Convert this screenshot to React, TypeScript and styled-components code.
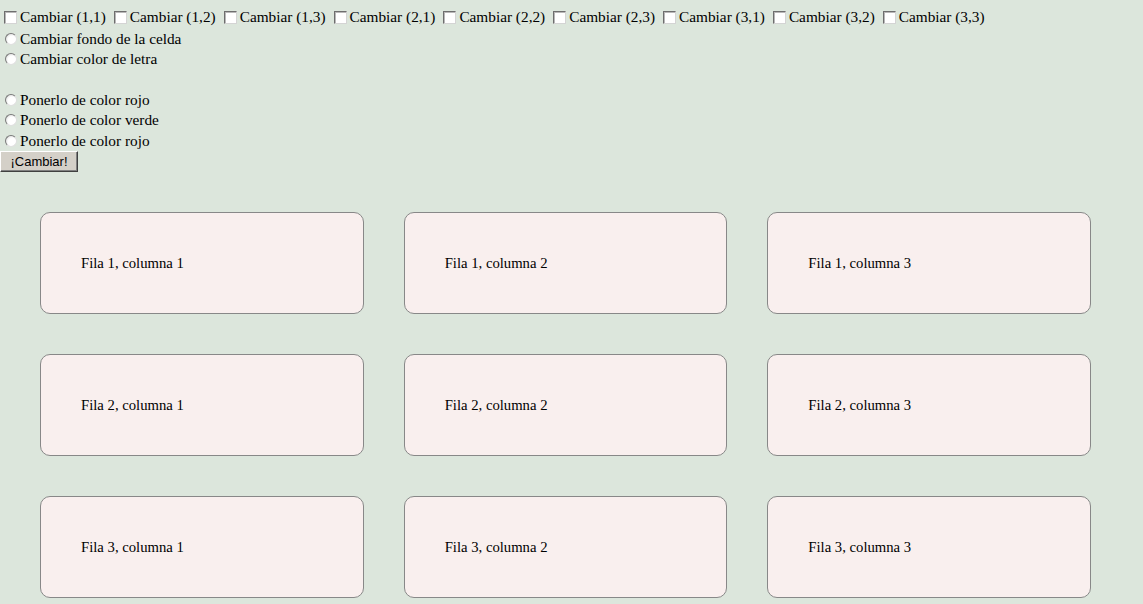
import React from "react";
import styled, { createGlobalStyle } from "styled-components";

const GlobalStyle = createGlobalStyle`
  body {
    margin: 0;
    background: #dce6dc;
    color: #000;
    font-family: "Liberation Serif", "Times New Roman", serif;
    font-size: 15.3px;
  }
`;

const StyledForm = styled.form`
  padding-top: 6px;
`;

const StyledLine = styled.div<{ $tall?: boolean }>`
  display: flex;
  align-items: center;
  gap: 4px;
  height: ${({ $tall }) => ($tall ? "22.5px" : "20.5px")};
  white-space: nowrap;
`;

const StyledSpacer = styled.div`
  height: 20px;
`;

const StyledLabel = styled.label`
  display: flex;
  align-items: center;
  line-height: 20px;
`;

const StyledCheckbox = styled.input.attrs({ type: "checkbox" })`
  appearance: none;
  width: 13px;
  height: 13px;
  margin: 1px 3px 0 4px;
  background: #fff;
  border: 1px solid;
  border-color: #6e6e6e #d4d4d4 #d4d4d4 #6e6e6e;
  box-shadow: inset 1px 1px 0 #b8b8b8;
  box-sizing: border-box;
  &:checked {
    background: #fff radial-gradient(circle, #000 35%, transparent 40%);
  }
`;

const StyledRadio = styled.input.attrs({ type: "radio" })`
  appearance: none;
  width: 12px;
  height: 12px;
  margin: 0 3px 0 5px;
  border-radius: 50%;
  box-sizing: border-box;
  background: radial-gradient(circle at 60% 60%, #fff 45%, #e4e4e4 75%);
  border: 1px solid;
  border-color: #7a7a7a #e0e0e0 #e0e0e0 #7a7a7a;
  &:checked {
    background: radial-gradient(circle, #000 30%, #fff 35%);
  }
`;

const StyledButton = styled.button`
  display: block;
  margin: 0;
  width: 78px;
  height: 21px;
  padding: 0;
  background: #d4d0c8;
  color: #000;
  font-family: "Liberation Sans", Arial, sans-serif;
  font-size: 13px;
  border: 1px solid;
  border-color: #fff #404040 #404040 #fff;
  box-shadow: inset -1px -1px 0 #808080;
`;

const StyledGrid = styled.div`
  display: grid;
  grid-template-columns: repeat(3, 1fr);
  gap: 40px;
  width: 1051px;
  padding: 40px;
`;

const StyledCell = styled.div`
  background: #f9efee;
  border: 1px solid #888;
  border-radius: 10px;
  padding: 40px;
  line-height: 20px;
  font-size: 14.7px;
`;

const cells = [1, 2, 3].flatMap((r) => [1, 2, 3].map((c) => ({ r, c })));

export default function App() {
  return (
    <>
      <GlobalStyle />
      <StyledForm onSubmit={(e) => e.preventDefault()}>
        <StyledLine $tall>
          {cells.map(({ r, c }) => (
            <StyledLabel key={`${r}${c}`}>
              <StyledCheckbox />
              Cambiar ({r},{c})
            </StyledLabel>
          ))}
        </StyledLine>
        <StyledLine>
          <StyledLabel>
            <StyledRadio name="tipo" />
            Cambiar fondo de la celda
          </StyledLabel>
        </StyledLine>
        <StyledLine>
          <StyledLabel>
            <StyledRadio name="tipo" />
            Cambiar color de letra
          </StyledLabel>
        </StyledLine>
        <StyledSpacer />
        <StyledLine>
          <StyledLabel>
            <StyledRadio name="color" />
            Ponerlo de color rojo
          </StyledLabel>
        </StyledLine>
        <StyledLine>
          <StyledLabel>
            <StyledRadio name="color" />
            Ponerlo de color verde
          </StyledLabel>
        </StyledLine>
        <StyledLine>
          <StyledLabel>
            <StyledRadio name="color" />
            Ponerlo de color rojo
          </StyledLabel>
        </StyledLine>
        <StyledButton type="submit">¡Cambiar!</StyledButton>
      </StyledForm>
      <StyledGrid>
        {cells.map(({ r, c }) => (
          <StyledCell key={`${r}${c}`}>
            Fila {r}, columna {c}
          </StyledCell>
        ))}
      </StyledGrid>
    </>
  );
}
